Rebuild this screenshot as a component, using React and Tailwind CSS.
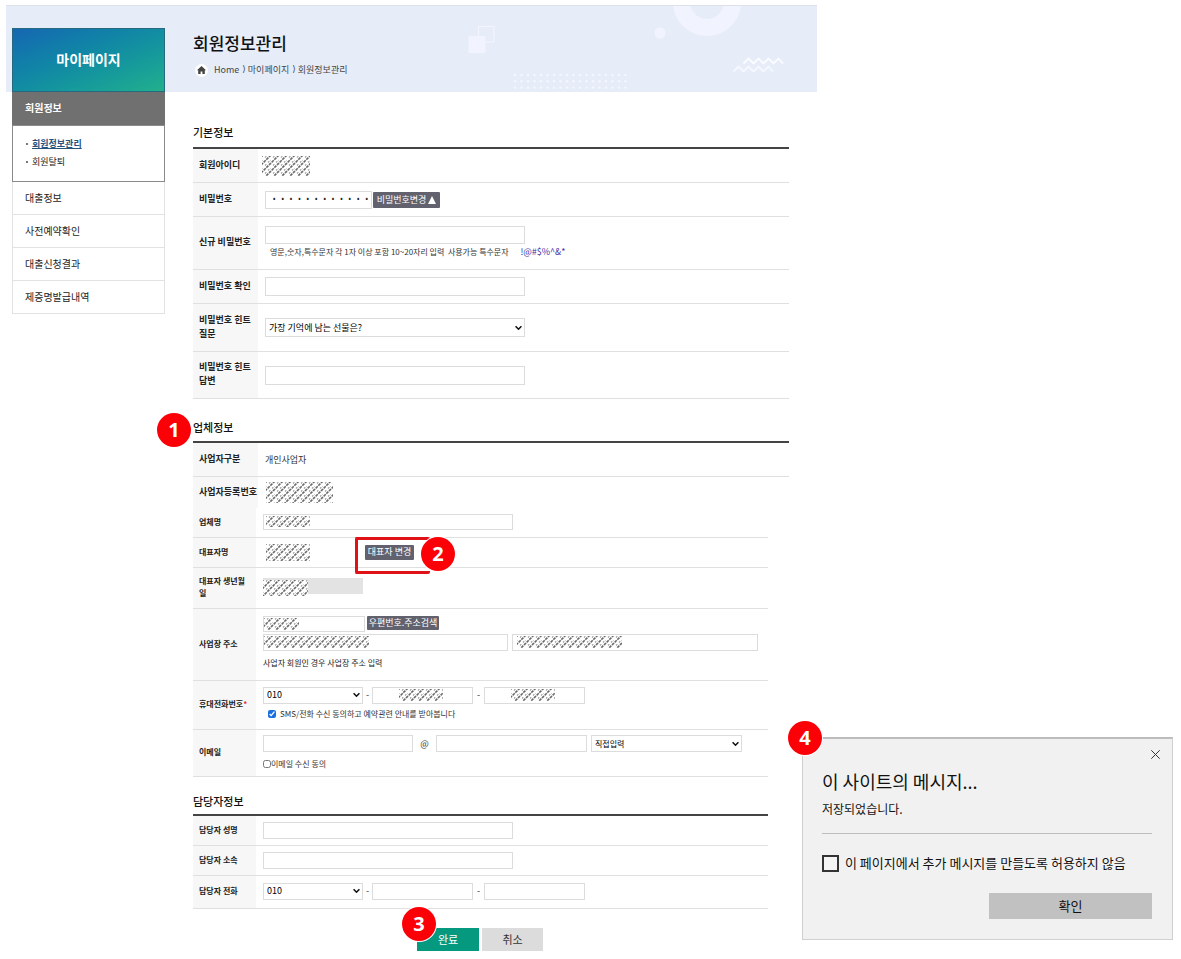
import React from "react";

const FIELD = "block border border-[#dcdcdc] bg-white text-[#222] outline-none";
const DARK_BUTTON = "shrink-0 rounded-[1px] bg-[#62626e] text-center text-[9px] text-white whitespace-nowrap";

function Badge({ n, className }) {
  return (
    <span
      className={`absolute z-20 flex size-[34px] items-center justify-center rounded-full bg-[#fb0007] font-['Open_Sans',sans-serif] text-[20px] leading-none font-bold text-white ring-1 ring-white ${className}`}
    >
      {n}
    </span>
  );
}

function Mask({ id, width, height, className = "" }) {
  return (
    <svg width={width} height={height} className={`block ${className}`} aria-hidden="true">
      <defs>
        <pattern id={id} width="8" height="8" patternUnits="userSpaceOnUse">
          <g stroke="#6c6c6c" strokeWidth="1.6" strokeDasharray="2.9 0.87">
            <path d="M-1 9L9 -1M-1 1L1 -1M7 9L9 7" />
          </g>
          <g stroke="#a0a0a0" strokeWidth="1.1" strokeDasharray="1.9 3.75">
            <path d="M-1 5.500L5.500 -1M2 10.500L10.500 2" />
          </g>
        </pattern>
      </defs>
      <rect width={width} height={height} fill={`url(#${id})`} />
    </svg>
  );
}

function Select({ id, label, value, className, textClass }) {
  return (
    <div className={`relative ${className}`}>
      <select
        id={id}
        aria-label={label}
        className={`block size-full appearance-none border border-[#dcdcdc] bg-white px-[3px] text-black outline-none ${textClass}`}
      >
        <option>{value}</option>
      </select>
      <svg className="pointer-events-none absolute top-1/2 right-[3px] -translate-y-1/2" width="7" height="5" viewBox="0 0 7 5" fill="none" stroke="#111" strokeWidth="1.6">
        <path d="M0.6 0.8L3.5 3.7L6.4 0.8" />
      </svg>
    </div>
  );
}

function SectionTitle({ children, className }) {
  return <h2 className={`relative text-[11px] leading-[20px] font-medium text-[#111] ${className}`}>{children}</h2>;
}

function Row({ label, htmlFor, height, small, last, required, children, cellClass = "" }) {
  const line = last ? "" : "border-b border-[#e0e0e0]";
  return (
    <tr>
      <th
        scope="row"
        className={`bg-[#f7f7f7] pb-[2px] pl-[6px] text-left align-middle font-bold text-[#222] ${small ? "w-[63px] text-[8px] leading-[12px]" : "w-[65px] text-[9px] leading-[14px]"} ${height} ${line}`}
      >
        <label htmlFor={htmlFor}>{label}</label>
        {required && <span className="text-[#e0303c]">*</span>}
      </th>
      <td className={`pl-[7px] align-middle text-[#333] ${small ? "text-[8px]" : "text-[9px]"} ${line} ${cellClass}`}>{children}</td>
    </tr>
  );
}

function Table({ top, className = "", children }) {
  return (
    <table className={`w-full border-separate border-spacing-0 ${top ? "border-t-2 border-[#444]" : ""} ${className}`}>
      <tbody>{children}</tbody>
    </table>
  );
}

function MaskedInput({ id, label, maskId, maskWidth, maskHeight, maskClass, className }) {
  return (
    <div className="relative">
      <input id={id} aria-label={label} className={`${FIELD} ${className}`} />
      <Mask id={maskId} width={maskWidth} height={maskHeight} className={`pointer-events-none absolute top-[2px] ${maskClass}`} />
    </div>
  );
}

function BannerArt() {
  const dots = [];
  for (let r = 0; r < 3; r++) for (let c = 0; c < 18; c++) dots.push([2 + c * 6.5, 2 + r * 6.3]);
  return (
    <div className="absolute inset-x-0 top-0 h-[87px] overflow-hidden border-t border-[#dde2ea] bg-[#e6edf9]">
      <svg className="absolute top-0 right-0" width="360" height="87" viewBox="457 5 360 87" fill="none">
        <rect x="478.500" y="25.500" width="15.500" height="15.500" stroke="#f2f5fd" />
        <rect x="468.500" y="35" width="17" height="17" rx="1" fill="#f1f4fe" />
        <circle cx="707" cy="1" r="25.500" stroke="#f1f4fe" strokeWidth="17" />
        <circle cx="660" cy="32" r="5.500" fill="#f1f4fe" />
        <g transform="translate(513 72)" fill="#f4f7fe">
          {dots.map(([x, y]) => (
            <circle key={`${x}-${y}`} cx={x} cy={y} r="1.200" />
          ))}
        </g>
        <path d="M743.500 62.500l5-5 5 5 5-5 5 5 5-5 5 5 5-5 4.500 5" stroke="#fafcff" strokeWidth="1.800" />
        <path d="M733.500 70.500l5-5 5 5 5-5 5 5 5-5 5 5 5-5 4.500 5" stroke="#f4f8ff" strokeWidth="1.800" />
      </svg>
    </div>
  );
}

function Sidebar() {
  return (
    <aside className="mt-[23px] w-[153px] shrink-0 text-[10px] text-[#222]">
      <div className="flex h-[64px] items-center justify-center border border-[#27697f] bg-linear-to-br from-[#1766b2] to-[#22b08c] pb-[2px] text-[14px] font-bold text-white">
        마이페이지
      </div>
      <div className="flex h-[33px] items-center bg-[#707070] pb-[2px] pl-[13px] font-bold text-white">회원정보</div>
      <ul className="flex h-[57px] flex-col justify-center border border-[#8a8a8a] bg-white pb-[2px] pl-[13px] text-[9px] leading-[18px]">
        <li className="flex items-center gap-[4px]">
          <span className="size-[2px] bg-[#777]" />
          <a href="#info" className="font-bold text-[#27537f] underline">회원정보관리</a>
        </li>
        <li className="flex items-center gap-[4px]">
          <span className="size-[2px] bg-[#777]" />
          <a href="#leave">회원탈퇴</a>
        </li>
      </ul>
      <ul className="border-x border-[#e2e2e2] bg-white">
        {["대출정보", "사전예약확인", "대출신청결과", "제증명발급내역"].map((t) => (
          <li key={t} className="h-[33px] border-b border-[#e2e2e2] pl-[12px] leading-[31px]">
            <a href="#menu">{t}</a>
          </li>
        ))}
      </ul>
    </aside>
  );
}

function Crumb() {
  return <span className="mr-[2px] ml-[3px] font-['DejaVu_Sans',sans-serif]">⟩</span>;
}

function PhoneFields({ prefix, masked }) {
  return (
    <div className="flex items-center text-[9px]">
      <Select id={prefix} value="010" className="h-[17px] w-[100px]" textClass="text-[9px]" />
      <span className="w-[9px] text-center">-</span>
      {[1, 2].map((n) => (
        <React.Fragment key={n}>
          {n === 2 && <span className="w-[11px] text-center">-</span>}
          {masked ? (
            <MaskedInput
              label={`전화번호 ${n}`}
              maskId={`${prefix}-mask-${n}`}
              maskWidth={44}
              maskHeight={12}
              maskClass="left-[27px]"
              className="h-[17px] w-[101px]"
            />
          ) : (
            <input aria-label={`전화번호 ${n}`} className={`${FIELD} h-[17px] w-[101px]`} />
          )}
        </React.Fragment>
      ))}
    </div>
  );
}

function Dialog() {
  return (
    <div role="dialog" aria-labelledby="dialog-title" className="absolute top-[737px] right-[8px] w-[371px] border border-t-2 border-[#d0d0d0] border-t-[#bcbcbc] bg-[#f1f1f1] pr-[20px] pb-[20px] pl-[19px] text-[#111]">
      <Badge n={4} className="-top-[18px] -left-[15px]" />
      <div className="-mr-[9px] flex justify-end pt-[10px]">
        <button type="button" aria-label="닫기" className="p-[1px]">
          <svg width="9" height="9" viewBox="0 0 9 9" stroke="#333" strokeWidth="1" fill="none">
            <path d="M0.300 0.300L8.700 8.700M8.700 0.300L0.300 8.700" />
          </svg>
        </button>
      </div>
      <h2 id="dialog-title" className="mt-[8px] text-[18px] leading-[26px]">이 사이트의 메시지...</h2>
      <p className="mt-[5px] text-[12px] leading-[20px]">저장되었습니다.</p>
      <hr className="mt-[14px] border-[#bdbdbd]" />
      <div className="mt-[19px] flex items-center gap-[6px]">
        <input id="no-more" type="checkbox" className="size-[17px] shrink-0 appearance-none border-2 border-[#333] bg-[#f4f4f4]" />
        <label htmlFor="no-more" className="text-[13px] leading-[20px] whitespace-nowrap">이 페이지에서 추가 메시지를 만들도록 허용하지 않음</label>
      </div>
      <div className="mt-[20px] flex justify-end">
        <button type="button" className="h-[26px] w-[163px] bg-[#c1c1c1] text-[13px]">확인</button>
      </div>
    </div>
  );
}

export default function App() {
  return (
    <div className="relative min-h-screen bg-white pt-[5px] pb-[8px] pl-[6px] font-['Noto_Sans_CJK_KR',sans-serif]">
      <div className="relative max-w-[811px]">
        <BannerArt />
        <div className="relative flex items-start gap-[28px] pl-[6px]">
          <Sidebar />
          <main className="min-w-0 max-w-[596px] flex-1">
            <header className="h-[87px] pt-[24px]">
              <h1 className="text-[17px] leading-[28px] font-medium text-[#111]">회원정보관리</h1>
              <nav className="mt-[5px] flex h-[16px] items-center text-[9px] whitespace-nowrap text-[#444]">
                <span className="mr-[6px] ml-[2px] flex size-[13px] items-center justify-center rounded-full bg-white">
                  <svg width="9" height="8" viewBox="0 0 9 8" fill="#444">
                    <path d="M4.500 0L9 4.200H7.800V8H5.400V5.400H3.600V8H1.200V4.200H0Z" />
                  </svg>
                </span>
                <a href="#home" className="text-[9px]">Home</a>
                <Crumb />
                <a href="#mypage">마이페이지</a>
                <Crumb />
                <span>회원정보관리</span>
              </nav>
            </header>

            <form>
              <SectionTitle className="mt-[30px] mb-[5px]">기본정보</SectionTitle>
              <Table top>
                <Row label="회원아이디" height="h-[34px]">
                  <Mask id="mask-id" width={48} height={20} className="-ml-[3px]" />
                </Row>
                <Row label="비밀번호" htmlFor="pw" height="h-[34px]">
                  <div className="flex items-center gap-[1px]">
                    <input id="pw" readOnly defaultValue="············" className={`${FIELD} h-[18px] w-[107px] pl-[4px] font-['Liberation_Mono',monospace] text-[14px]`} />
                    <button type="button" className={`${DARK_BUTTON} h-[16px] w-[67px] leading-[15px]`}>
                      비밀번호변경
                      <svg className="ml-[2px] inline-block align-[-1px]" width="8" height="8" viewBox="0 0 8 8" fill="#fff">
                        <path d="M4 0L8 8H0Z" />
                      </svg>
                    </button>
                  </div>
                </Row>
                <Row label="신규 비밀번호" htmlFor="new-pw" height="h-[53px]">
                  <input id="new-pw" type="password" className={`${FIELD} h-[18px] w-[260px]`} />
                  <p className="ml-[5px] text-[8px] leading-[16px] whitespace-nowrap">
                    영문,숫자,특수문자 각 1자 이상 포함 10~20자리 입력&nbsp; 사용가능 특수문자 <span className="ml-[10px] text-[9px] text-[#3b32a8]">!@#$%^&amp;*</span>
                  </p>
                </Row>
                <Row label="비밀번호 확인" htmlFor="confirm" height="h-[34px]">
                  <input id="confirm" type="password" className={`${FIELD} h-[19px] w-[260px]`} />
                </Row>
                <Row label={<>비밀번호 힌트<br />질문</>} htmlFor="hint-q" height="h-[48px]">
                  <Select id="hint-q" value="가장 기억에 남는 선물은?" className="h-[19px] w-[260px]" textClass="text-[9px]" />
                </Row>
                <Row label={<>비밀번호 힌트<br />답변</>} htmlFor="hint-a" height="h-[47px]">
                  <input id="hint-a" className={`${FIELD} h-[19px] w-[260px]`} />
                </Row>
              </Table>

              <SectionTitle className="mt-[18px] mb-[4px]">
                업체정보
                <Badge n={1} className="-top-[4px] -left-[36px]" />
              </SectionTitle>
              <Table top>
                <Row label="사업자구분" height="h-[34px]">개인사업자</Row>
                <Row label={<span className="whitespace-nowrap">사업자등록번호</span>} height="h-[31px]" last>
                  <Mask id="mask-bizno" width={67} height={21} className="ml-[1px]" />
                </Row>
              </Table>
              <Table className="max-w-[575px]">
                <Row small label="업체명" htmlFor="company" height="h-[30px]" cellClass="pb-[1px]">
                  <MaskedInput id="company" maskId="mask-company" maskWidth={44} maskHeight={11} maskClass="left-[3px]" className="h-[16px] w-[250px]" />
                </Row>
                <Row small label="대표자명" height="h-[30px]" cellClass="pb-[1px]">
                  <div className="relative flex items-center">
                    <Mask id="mask-ceo" width={44} height={17} className="ml-[3px]" />
                    <button type="button" className={`${DARK_BUTTON} ml-[55px] h-[15px] w-[49px] leading-[14px]`}>대표자 변경</button>
                    <div className="pointer-events-none absolute -top-[7px] left-[92px] z-10 h-[37px] w-[75px] rounded-[2px] border-3 border-r-0 border-[#e01217]" />
                    <Badge n={2} className="-top-[7px] left-[158px]" />
                  </div>
                </Row>
                <Row small label={<>대표자 생년월<br />일</>} htmlFor="birth" height="h-[41px]" cellClass="pb-[4px]">
                  <div className="relative">
                    <input id="birth" readOnly className="block h-[16px] w-[100px] bg-[#e3e3e3]" />
                    <div className="absolute top-[2px] left-0 bg-white">
                      <Mask id="mask-birth" width={45} height={16} />
                    </div>
                  </div>
                </Row>
                <Row small label="사업장 주소" htmlFor="zip" height="h-[72px]" cellClass="pb-[4px]">
                  <div className="flex items-start gap-[2px]">
                    <MaskedInput id="zip" maskId="mask-zip" maskWidth={35} maskHeight={12} maskClass="left-[1px]" className="h-[16px] w-[102px]" />
                    <button type="button" className={`${DARK_BUTTON} h-[14px] w-[72px] leading-[13px]`}>우편번호.주소검색</button>
                  </div>
                  <div className="mt-[2px] flex gap-[4px]">
                    <MaskedInput label="주소" maskId="mask-addr1" maskWidth={105} maskHeight={12} maskClass="left-[1px]" className="h-[17px] w-[245px]" />
                    <MaskedInput label="상세 주소" maskId="mask-addr2" maskWidth={105} maskHeight={12} maskClass="left-[5px]" className="h-[17px] w-[246px]" />
                  </div>
                  <p className="mt-[5px] leading-[14px] text-[#222]">사업자 회원인 경우 사업장 주소 입력</p>
                </Row>
                <Row small required label="휴대전화번호" htmlFor="mobile" height="h-[49px]" cellClass="pb-[3px]">
                  <PhoneFields prefix="mobile" masked />
                  <div className="mt-[3px] ml-[5px] flex items-center gap-[4px]">
                    <input id="sms" type="checkbox" defaultChecked className="size-[8px] accent-[#1a6fe0]" />
                    <label htmlFor="sms" className="leading-[14px]">SMS/전화 수신 동의하고 예약관련 안내를 받아봅니다</label>
                  </div>
                </Row>
                <Row small label="이메일" htmlFor="email" height="h-[47px]">
                  <div className="flex items-center">
                    <input id="email" className={`${FIELD} h-[17px] w-[150px]`} />
                    <span className="w-[23px] text-center text-[9px]">@</span>
                    <input aria-label="이메일 도메인" className={`${FIELD} mr-[4px] h-[17px] w-[151px]`} />
                    <Select label="도메인 선택" value="직접입력" className="h-[17px] w-[151px]" textClass="text-[8px]" />
                  </div>
                  <div className="mt-[5px] flex items-center">
                    <input id="email-ok" type="checkbox" className="size-[8px]" />
                    <label htmlFor="email-ok" className="leading-[14px]">이메일 수신 동의</label>
                  </div>
                </Row>
              </Table>

              <SectionTitle className="mt-[14px] mb-[3px]">담당자정보</SectionTitle>
              <Table top className="max-w-[575px]">
                <Row small label="담당자 성명" htmlFor="mgr-name" height="h-[30px]">
                  <input id="mgr-name" className={`${FIELD} h-[17px] w-[250px]`} />
                </Row>
                <Row small label="담당자 소속" htmlFor="mgr-dept" height="h-[30px]">
                  <input id="mgr-dept" className={`${FIELD} h-[17px] w-[250px]`} />
                </Row>
                <Row small label="담당자 전화" htmlFor="mgr-tel" height="h-[33px]" cellClass="pb-[2px]">
                  <PhoneFields prefix="mgr-tel" />
                </Row>
              </Table>

              <div className="mt-[19px] flex max-w-[574px] justify-center">
                <div className="relative flex gap-[3px] text-[11px]">
                  <Badge n={3} className="-top-[21px] -left-[15px]" />
                  <button type="submit" className="h-[23px] w-[62px] bg-[#059a80] text-white">완료</button>
                  <button type="button" className="h-[23px] w-[61px] bg-[#dcdcdc] text-[#333]">취소</button>
                </div>
              </div>
            </form>
          </main>
        </div>
      </div>
      <Dialog />
    </div>
  );
}
